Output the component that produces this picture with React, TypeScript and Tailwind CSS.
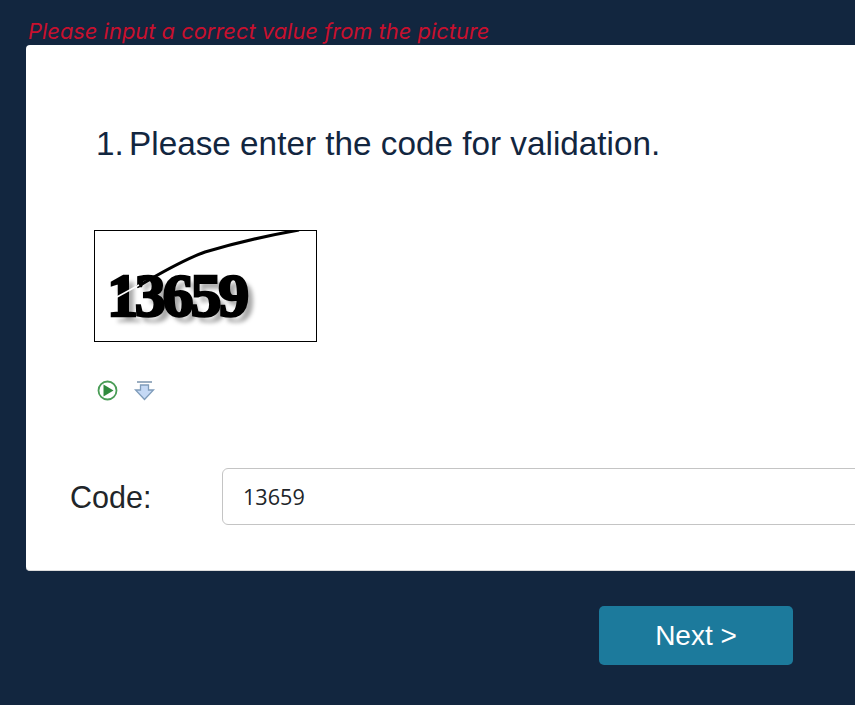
export default function App() {
  return (
    <div className="h-[705px] w-[855px] overflow-hidden bg-[#12263f] pl-[26px] pt-[19px] font-['Liberation_Sans',sans-serif]">
      <div className="h-[26px] w-[900px] pl-[2px] font-['Inter',sans-serif] text-[21.9px] leading-[25px] italic text-[#c8102e]">
        Please input a correct value from the picture
      </div>
      <div className="h-[526px] w-[900px] rounded-[4px] border-b border-[#dcdcdc] bg-white pt-[79px]">
        <div className="pl-[70px] text-[33.3px] leading-[40px] text-[#12263f]">
          <span className="[word-spacing:-4px]">1. </span>Please enter the code for validation.
        </div>
        <div className="relative mt-[66px] ml-[68px] h-[112px] w-[223px] overflow-hidden border border-black bg-white">
          <div className="absolute left-[12px] top-[24px] font-['Liberation_Serif',serif] text-[62px] leading-[80px] font-bold tracking-[-3.2px] text-black blur-[0.6px] [-webkit-text-stroke:2.5px_#000] [text-shadow:6px_6px_4px_#a8a8a8]">
            13659
          </div>
          <svg className="absolute inset-0" width="221" height="110" viewBox="0 0 221 110">
            <path d="M42 56 C62 44 88 29 110 21 C140 12 170 5 204 -1" fill="none" stroke="#000" strokeWidth="3" />
            <path d="M22 66 L44 54" fill="none" stroke="#fff" strokeWidth="1.5" />
          </svg>
        </div>
        <div className="mt-[38px] ml-[71px] flex items-center gap-[15px]">
          <svg width="21" height="21" viewBox="0 0 21 21">
            <circle cx="10.5" cy="10.5" r="9" fill="#fff" stroke="#4a9d57" strokeWidth="1.8" />
            <path d="M6.5 4.5 L16.5 10.5 L6.5 16.5 Z" fill="#2f8a3d" />
          </svg>
          <svg width="22" height="21" viewBox="0 0 22 21">
            <path d="M4 2 H19" stroke="#7a93ad" strokeWidth="1.5" />
            <path d="M7.5 5 H15.5 V10 H20.5 L11.5 19.5 L2.5 10 H7.5 Z" fill="#c5d9f5" stroke="#7f9cba" strokeWidth="1.3" />
          </svg>
        </div>
        <div className="mt-[67px] flex items-center pl-[44px]">
          <div className="w-[152px] text-[30.5px] leading-[40px] text-[#212529]">Code:</div>
          <input
            readOnly
            value="13659"
            className="h-[57px] w-[700px] rounded-[6px] border border-[#c4c4c4] bg-white pl-[20px] font-['Open_Sans',sans-serif] text-[21.6px] text-[#212529] outline-none"
          />
        </div>
      </div>
      <div className="mt-[35px] flex w-[767px] justify-end">
        <button className="h-[59px] w-[194px] rounded-[5px] bg-[#1c7a9c] text-[28px] text-white">Next &gt;</button>
      </div>
    </div>
  );
}
